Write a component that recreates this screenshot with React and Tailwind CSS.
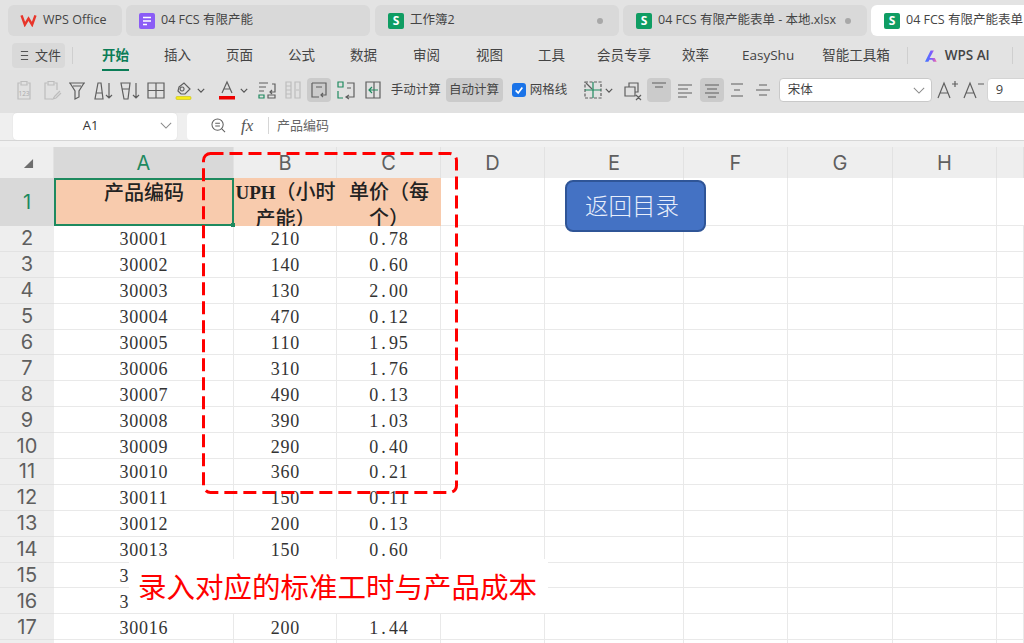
import React from 'react'

const uiFont = '[font-family:"Open_Sans","Noto_Sans_CJK_SC",sans-serif]'
const headFont = '[font-family:"Inter","Noto_Sans_CJK_SC",sans-serif]'
const cellFont = '[font-family:"Liberation_Serif","Noto_Sans_CJK_SC",serif]'

const columns = [
  { name: 'A', w: 'w-[180px]' },
  { name: 'B', w: 'w-[103px]' },
  { name: 'C', w: 'w-[104px]' },
  { name: 'D', w: 'w-[104px]' },
  { name: 'E', w: 'w-[139px]' },
  { name: 'F', w: 'w-[104px]' },
  { name: 'G', w: 'w-[105px]' },
  { name: 'H', w: 'w-[104px]' },
  { name: '', w: 'w-[27px]' },
]

const rows = [
  ['30001', '210', '0.78'],
  ['30002', '140', '0.60'],
  ['30003', '130', '2.00'],
  ['30004', '470', '0.12'],
  ['30005', '110', '1.95'],
  ['30006', '310', '1.76'],
  ['30007', '490', '0.13'],
  ['30008', '390', '1.03'],
  ['30009', '290', '0.40'],
  ['30010', '360', '0.21'],
  ['30011', '150', '0.11'],
  ['30012', '200', '0.13'],
  ['30013', '150', '0.60'],
  ['3', '', ''],
  ['3', '', ''],
  ['30016', '200', '1.44'],
  ['', '', ''],
]

const menus = [
  { label: '插入', cls: 'ml-[35px]' },
  { label: '页面', cls: 'ml-[35px]' },
  { label: '公式', cls: 'ml-[35px]' },
  { label: '数据', cls: 'ml-[35px]' },
  { label: '审阅', cls: 'ml-[36px]' },
  { label: '视图', cls: 'ml-[36px]' },
  { label: '工具', cls: 'ml-[35px]' },
  { label: '会员专享', cls: 'ml-[32px]' },
  { label: '效率', cls: 'ml-[31px]' },
  { label: 'EasyShu', cls: 'ml-[33px]' },
  { label: '智能工具箱', cls: 'ml-[28px]' },
]

function Ico({ children, className = 'text-[#5f5f5f]' }) {
  return (
    <svg viewBox="0 0 24 24" fill="none" stroke="currentColor" strokeWidth="1.2" className={`w-6 h-6 shrink-0 ${className}`}>
      {children}
    </svg>
  )
}

function Caret({ className = '' }) {
  return (
    <svg viewBox="0 0 10 6" fill="none" stroke="#555" strokeWidth="1.5" className={`w-[8px] h-[5px] shrink-0 ${className}`}>
      <path d="M1 1l4 4 4-4" />
    </svg>
  )
}

function Chevron({ className = '' }) {
  return (
    <svg viewBox="0 0 14 8" fill="none" stroke="#8a8a8a" strokeWidth="1.2" className={`w-[12px] h-[7px] shrink-0 ${className}`}>
      <path d="M1 1l6 6 6-6" />
    </svg>
  )
}

function Tab({ icon, label, active, dot, cls }) {
  return (
    <div className={`h-[31px] rounded-[6px] flex items-center shrink-0 ${cls} ${active ? 'bg-white' : 'bg-[#d9d9d9]'}`}>
      {icon}
      <span className="ml-[6px] text-[12.5px] text-[#444] whitespace-nowrap">{label}</span>
      {dot && <span className="ml-auto mr-[16px] w-[6px] h-[6px] rounded-full bg-[#a8a8a8]" />}
    </div>
  )
}

function SheetIcon() {
  return (
    <span className="ml-[13px] w-4 h-4 rounded-[2px] bg-[#0f9d63] text-white text-[12px] font-bold leading-4 text-center shrink-0">S</span>
  )
}

function Cell({ text, cls = '' }) {
  return (
    <div className={`h-full shrink-0 border-r border-b border-[#e9e9e9] flex items-center pt-[3px] text-[18px] text-[#333] overflow-hidden ${text === '3' ? 'justify-start pl-[65px]' : 'justify-center'} ${cls}`}>
      <span className="flex">
        {text.split('').map((c, i) => (
          <span key={i} className="inline-block w-[9.8px] text-center">{c}</span>
        ))}
      </span>
    </div>
  )
}

export default function App() {
  return (
    <div className={`relative w-[1024px] h-[643px] overflow-hidden bg-white ${uiFont}`}>
      {/* tabs */}
      <div className="h-[41px] bg-[#e3e3e3] flex items-start pt-[5px] pl-[8px] gap-[4px] overflow-hidden">
        <Tab
          cls="w-[114px]"
          label="WPS Office"
          icon={
            <svg viewBox="0 0 18 14" className="ml-[12px] w-[17px] h-[13px] shrink-0" fill="none" stroke="#e8352a" strokeWidth="2.6" strokeLinejoin="miter">
              <path d="M1.5 1.5l3.6 10 3.9-6.5 3.9 6.5 3.6-10" />
            </svg>
          }
        />
        <Tab
          cls="w-[244px]"
          label="04 FCS 有限产能"
          icon={
            <svg viewBox="0 0 16 16" className="ml-[13px] w-4 h-4 shrink-0">
              <rect width="16" height="16" rx="2" fill="#8b5cf6" />
              <path d="M4 4.5h8M4 8h8M4 11.5h4" stroke="#fff" strokeWidth="1.6" />
            </svg>
          }
        />
        <Tab cls="w-[244px] ml-[1px]" label="工作簿2" icon={<SheetIcon />} dot />
        <Tab cls="w-[244px]" label="04 FCS 有限产能表单 - 本地.xlsx" icon={<SheetIcon />} dot />
        <Tab cls="w-[200px]" label="04 FCS 有限产能表单" icon={<SheetIcon />} active />
      </div>

      {/* ribbon menu */}
      <div className="h-[29px] bg-[#e3e3e3] flex items-center pl-[12px] text-[13.5px] text-[#444] whitespace-nowrap">
        <div className="w-[53px] h-[25px] rounded-[4px] bg-[#d9d9d9] flex items-center pl-[8px] text-[13px]">
          <svg viewBox="0 0 10 12" className="w-[9px] h-[11px] shrink-0" stroke="#555" strokeWidth="1.2">
            <path d="M1 1.5h8M1 6h8M1 10.5h8" />
          </svg>
          <span className="ml-[6px]">文件</span>
        </div>
        <div className="ml-[7px] w-px h-[17px] bg-[#cfcfcf]" />
        <div className="relative ml-[29px] h-full flex items-center font-bold text-[#0b7d57]">
          开始
          <span className="absolute left-0 right-0 bottom-[-1px] h-[2px] bg-[#0b7d57]" />
        </div>
        {menus.map((m) => (
          <span key={m.label} className={m.cls}>{m.label}</span>
        ))}
        <div className="ml-[17px] w-px h-[17px] bg-[#cfcfcf]" />
        <svg viewBox="0 0 16 12" className="ml-[17px] w-[15px] h-[12px] shrink-0">
          <defs>
            <linearGradient id="wpsai" x1="0" y1="0" x2="1" y2="0">
              <stop offset="0" stopColor="#3d7bff" />
              <stop offset="0.55" stopColor="#7a5cff" />
              <stop offset="1" stopColor="#ff6aa2" />
            </linearGradient>
          </defs>
          <path d="M0 12L6 0h3.5L5 8h5.5l2 4H9L7.6 10H4.8L3.6 12z" fill="url(#wpsai)" />
        </svg>
        <span className="ml-[5px] font-semibold text-[13.5px]">WPS AI</span>
        <div className="ml-[22px] w-px h-[17px] bg-[#cfcfcf]" />
      </div>

      {/* toolbar */}
      <div className="h-[43px] bg-[#e1e1e1] flex items-center pl-[11px] pb-[3px] whitespace-nowrap text-[12px] text-[#444] [&>*]:shrink-0">
        <div className="w-[26.4px] flex justify-center">
          <Ico className="text-[#bdbdbd]">
            <path d="M8 5H6v16h12V5h-2M9 3.5h6V7H9z" />
            <text x="12" y="18" fontSize="6.5" textAnchor="middle" fill="#aaa" stroke="none">123</text>
          </Ico>
        </div>
        <div className="w-[26.4px] flex justify-center">
          <Ico className="text-[#bdbdbd]">
            <path d="M8 5H6v16h7M16 5h2v7M9 3.5h6V7H9zM21 13l-5 5-2 3 3-1 5-5" />
          </Ico>
        </div>
        <div className="w-[26.4px] flex justify-center">
          <Ico>
            <path d="M4 5h16M5 5l5 8v8l4-2v-6l5-8M8 8h8" />
          </Ico>
        </div>
        <div className="w-[26.4px] flex justify-center">
          <Ico>
            <path d="M7 5h3l2 16H4zM5 15h6M18 5v15M15 17l3 3 3-3" />
          </Ico>
        </div>
        <div className="w-[26.4px] flex justify-center">
          <Ico>
            <path d="M3 5h9l-2 16H6zM4 11h7M18 5v15M15 17l3 3 3-3" />
          </Ico>
        </div>
        <div className="w-[26.4px] flex justify-center">
          <Ico>
            <path d="M4 5h16v15H4zM4 12.5h16M12 5v15" />
          </Ico>
        </div>
        <div className="ml-[3px] w-[40px] flex items-center">
          <Ico>
            <path d="M7 9l5-4 6 6-5 5H9l-3-3z" />
            <path d="M10 9a2 2 0 1 0 .1 0" />
            <rect x="4" y="18.5" width="15" height="3" rx="1" fill="#f6ec17" stroke="#c9bf10" strokeWidth="0.6" />
          </Ico>
          <Caret className="ml-[1px]" />
        </div>
        <div className="ml-[3px] w-[38px] flex items-center">
          <Ico>
            <path d="M7 15l5-11 5 11M9 11h6" />
            <rect x="4" y="18" width="16" height="3.5" fill="#ee0000" stroke="none" />
          </Ico>
          <Caret className="ml-[1px]" />
        </div>
        <div className="w-[26.4px] flex justify-center">
          <Ico>
            <path d="M4 5h9M4 9h7M4 13h5M17 6h3v8h-5M17 12l-2 2 2 2" />
            <path d="M4 17h5v3H4z" stroke="#1e8a5f" />
            <path d="M13 17h7v3h-7z" />
          </Ico>
        </div>
        <div className="w-[26.4px] flex justify-center">
          <Ico className="text-[#bdbdbd]">
            <path d="M5 4h5v16H5zM14 4h5v16h-5zM5 8h5M5 12h5M5 16h5M15 12h3" />
          </Ico>
        </div>
        <div className="ml-[1px] w-[24px] h-[24px] rounded-[4px] bg-[#cbcbcb] flex items-center justify-center">
          <Ico>
            <path d="M5 5h14v9M5 5v14h7M9 9h6M19 14v3h-5M16 15l-2 2 2 2" />
          </Ico>
        </div>
        <div className="ml-[1.5px] w-[26px] flex justify-center">
          <Ico>
            <path d="M4 4h5v5H4zM4 13v7h5" stroke="#1e8a5f" />
            <path d="M13 5h7v14h-8M15 17l-3 2 3 2M13 10h4" />
          </Ico>
        </div>
        <div className="ml-[1px] w-[26px] flex justify-center">
          <Ico>
            <path d="M5 4h14v16H5zM13 4v16" />
            <path d="M17 12H8M11 9l-3 3 3 3" stroke="#1e8a5f" />
          </Ico>
        </div>
        <span className="ml-[5px] text-[12.5px] w-[50px]">手动计算</span>
        <div className="ml-[5px] w-[57px] h-[24px] rounded-[4px] bg-[#cbcbcb] flex items-center justify-center text-[12.5px]">自动计算</div>
        <span className="ml-[9px] w-[14px] h-[14px] rounded-[3px] bg-[#1a73e8] flex items-center justify-center">
          <svg viewBox="0 0 12 12" className="w-[10px] h-[10px]" fill="none" stroke="#fff" strokeWidth="2">
            <path d="M2 6.5l3 3 5-6.5" />
          </svg>
        </span>
        <span className="ml-[4px] text-[12.5px] w-[38px]">网格线</span>
        <div className="ml-[13px] w-[36px] flex items-center">
          <Ico>
            <path d="M4 4h16v16H4z" strokeDasharray="3 1.5" />
            <path d="M4 12h16M12 4v16" stroke="#1e8a5f" />
            <path d="M5 5l6 6" />
          </Ico>
          <Caret className="ml-0" />
        </div>
        <div className="ml-[3px] w-[24px] flex justify-center">
          <Ico>
            <path d="M5 9h10v9H5zM9 9V5h9v9h-3M16 17l5 5M21 17l-5 5" />
          </Ico>
        </div>
        <div className="ml-[3px] w-[24px] h-[24px] rounded-[4px] bg-[#cbcbcb] flex items-center justify-center">
          <Ico><path d="M5 5h14M8 9h8" /></Ico>
        </div>
        <div className="ml-[1px] w-[26px] flex justify-center">
          <Ico><path d="M5 7h14M5 11h10M5 15h14M5 19h9" /></Ico>
        </div>
        <div className="ml-[2px] w-[24px] h-[24px] rounded-[4px] bg-[#cbcbcb] flex items-center justify-center">
          <Ico><path d="M5 7h14M7 11h10M5 15h14M8 19h8" /></Ico>
        </div>
        <div className="w-[26px] flex justify-center">
          <Ico><path d="M6 6h12M9 12h6M6 18h12" /></Ico>
        </div>
        <div className="w-[26px] flex justify-center">
          <Ico><path d="M8 7h8M5 12h14M8 17h8" /></Ico>
        </div>
        <div className="ml-[3px] w-[153px] h-[24px] rounded-[4px] bg-white border border-[#c9c9c9] flex items-center pl-[8px] pr-[6px]">
          <span className="text-[12.5px]">宋体</span>
          <Chevron className="ml-auto" />
        </div>
        <div className="ml-[2px] w-[26px] flex justify-center">
          <Ico><path d="M3 20l6-15 6 15M5.5 15h7M17 6h6M20 3v6" /></Ico>
        </div>
        <div className="w-[26px] flex justify-center">
          <Ico><path d="M3 20l6-15 6 15M5.5 15h7M17 6h6" /></Ico>
        </div>
        <div className="ml-[1px] w-[60px] h-[24px] rounded-[4px] bg-white border border-[#d4d4d4] flex items-center pl-[8px] text-[13px]">9</div>
      </div>

      {/* formula bar */}
      <div className="h-[28px] bg-[#efefef] flex pl-[13px] gap-[10px] border-b border-[#d6d6d6]">
        <div className="w-[164px] h-full rounded-[4px] bg-white flex items-center pb-[2px] text-[13px] text-[#333] shadow-[0_0_1px_#ccc]">
          <span className="flex-1 text-center pl-[8px]">A1</span>
          <Chevron className="mr-[5px]" />
        </div>
        <div className="flex-1 h-full rounded-l-[4px] bg-white flex items-center pb-[2px] text-[#555]">
          <svg viewBox="0 0 16 16" className="ml-[24px] w-[15px] h-[15px] shrink-0" fill="none" stroke="#5f5f5f" strokeWidth="1.1">
            <circle cx="7" cy="7" r="6" />
            <path d="M4.5 5.5h5M4.5 8.5h5M11.5 11.5l3.5 3.5" />
          </svg>
          <span className="ml-[15px] w-[16px] [font-family:'Liberation_Serif',serif] italic text-[17px] leading-none">fx</span>
          <span className="ml-[11px] w-px h-[17px] bg-[#d6d6d6]" />
          <span className="ml-[8px] text-[13px] text-[#666]">产品编码</span>
        </div>
      </div>

      {/* sheet */}
      <div className="h-[6px] bg-[#f1f1f1]" />
      <div className={`relative ${cellFont}`}>
        <div className={`flex h-[31px] bg-[#eeeeee] text-[20px] text-[#5f5f5f] ${headFont}`}>
          <div className="relative w-[54px] shrink-0 border-r border-[#e2e2e2]">
            <svg viewBox="0 0 12 12" className="absolute left-[23px] top-[11px] w-[11px] h-[11px]">
              <path d="M11 1v10H1z" fill="#6e6e6e" />
            </svg>
          </div>
          {columns.map((c) => (
            <div
              key={c.name}
              className={`${c.w} shrink-0 border-r border-[#e2e2e2] flex items-center justify-center ${c.name === 'A' ? 'bg-[#d9d9d9] text-[#1e8a5f]' : ''}`}
            >
              {c.name}
            </div>
          ))}
        </div>

        {/* row 1 */}
        <div className="flex h-[48px]">
          <div className={`w-[54px] shrink-0 bg-[#d9d9d9] flex items-center justify-center text-[20px] text-[#1e8a5f] ${headFont}`}>1</div>
          <div className="relative w-[180px] shrink-0 bg-[#f8cbad] border-2 border-[#1e8a5f] text-center font-medium text-[20px] leading-[26px] text-[#222]">
            产品编码
            <span className="absolute right-[-3px] bottom-[-3px] w-[4px] h-[4px] bg-[#1e8a5f]" />
          </div>
          <div className="w-[103px] shrink-0 bg-[#f8cbad] overflow-hidden text-center font-medium text-[20px] leading-[26px] text-[#222] whitespace-nowrap pt-[1px]">
            <div><span className="text-[19px] font-bold">UPH</span>（小时</div>
            <div>产能）</div>
          </div>
          <div className="w-[104px] shrink-0 bg-[#f8cbad] overflow-hidden text-center font-medium text-[20px] leading-[26px] text-[#222] whitespace-nowrap pt-[1px]">
            <div>单价（每</div>
            <div>个）</div>
          </div>
          <div className="w-[104px] shrink-0 border-r border-b border-[#e9e9e9]" />
          <div className="w-[139px] shrink-0 border-r border-b border-[#e9e9e9]" />
          <div className="w-[104px] shrink-0 border-r border-b border-[#e9e9e9]" />
          <div className="w-[105px] shrink-0 border-r border-b border-[#e9e9e9]" />
          <div className="w-[104px] shrink-0 border-r border-b border-[#e9e9e9]" />
          <div className="w-[27px] shrink-0 border-b border-[#e9e9e9]" />
        </div>

        {rows.map((r, i) => (
          <div key={i} className="flex h-[25.9px]">
            <div className={`w-[54px] shrink-0 bg-[#eeeeee] border-b border-[#e2e2e2] flex justify-center text-[20px] text-[#5f5f5f] ${i === 16 ? 'items-start leading-tight' : 'items-center'} ${headFont}`}>
              {i + 2}
            </div>
            <Cell text={r[0]} cls="w-[180px]" />
            <Cell text={r[1]} cls="w-[103px]" />
            <Cell text={r[2]} cls="w-[104px]" />
            <Cell text="" cls="w-[104px]" />
            <Cell text="" cls="w-[139px]" />
            <Cell text="" cls="w-[104px]" />
            <Cell text="" cls="w-[105px]" />
            <Cell text="" cls="w-[104px]" />
            <Cell text="" cls="w-[27px]" />
          </div>
        ))}
      </div>

      {/* shapes lying over the sheet */}
      <svg className="absolute left-[200px] top-[150px] w-[260px] h-[346px]" viewBox="0 0 260 346" fill="none">
        <rect x="3.5" y="3.5" width="253" height="339" rx="7" stroke="#ff0000" strokeWidth="3" strokeDasharray="13 6" />
      </svg>
      <div className="absolute left-[565px] top-[180px] w-[141px] h-[52px] rounded-[8px] bg-[#4472c4] border-2 border-[#2f5597] flex items-center pl-[18px] text-[23.5px] font-light text-[#e8eefb] [font-family:'Noto_Sans_CJK_SC',sans-serif]">
        返回目录
      </div>
      <div className="absolute left-[129px] top-[559px] w-[419px] h-[54px] bg-white flex items-center pl-[9px] text-[28.5px] text-[#ff0000] whitespace-nowrap [font-family:'Noto_Sans_CJK_SC',sans-serif]">
        录入对应的标准工时与产品成本
      </div>
    </div>
  )
}
